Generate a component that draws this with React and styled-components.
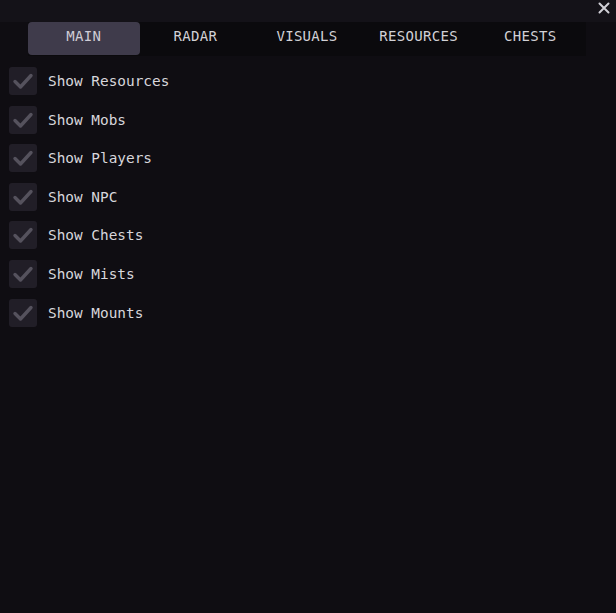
import React from "react";
import styled, { createGlobalStyle } from "styled-components";

const GlobalStyle = createGlobalStyle`
  html, body {
    margin: 0;
    padding: 0;
    background: #0f0d12;
  }
`;

const Window = styled.div`
  width: 616px;
  height: 613px;
  background: #0f0d12;
  font-family: "DejaVu Sans Mono", "Liberation Mono", monospace;
  color: #d6d5da;
  overflow: hidden;
`;

const TitleBar = styled.div`
  height: 22px;
  background: #141218;
  display: flex;
  justify-content: flex-end;
  align-items: flex-start;
`;

const CloseButton = styled.button`
  width: 22px;
  height: 16px;
  margin-right: 1px;
  padding: 0;
  border: none;
  background: transparent;
  display: flex;
  align-items: center;
  justify-content: center;
  cursor: pointer;
`;

const TabBar = styled.div`
  height: 34px;
  padding-left: 28px;
  display: flex;
`;

const TabStrip = styled.div`
  display: flex;
  background: #0b0a0d;
  width: 558px;
`;

const Tab = styled.div`
  width: 112px;
  height: 33px;
  box-sizing: border-box;
  padding-bottom: 5px;
  display: flex;
  align-items: center;
  justify-content: center;
  font-size: 14px;
  letter-spacing: 0.3px;
  color: ${(p) => (p.$active ? "#cfcdd6" : "#d2d1d6")};
  background: ${(p) => (p.$active ? "#3f3b4b" : "transparent")};
  border-radius: 4px;
`;

const List = styled.div`
  display: flex;
  flex-direction: column;
  gap: 10.6px;
  padding: 11px 0 0 9px;
`;

const Row = styled.label`
  display: flex;
  align-items: center;
  gap: 11px;
  height: 28px;
  font-size: 14.4px;
  color: #d8d7dc;
`;

const Box = styled.span`
  width: 28px;
  height: 28px;
  border-radius: 3px;
  background: #211e27;
  display: flex;
  align-items: center;
  justify-content: center;
`;

const tabs = ["MAIN", "RADAR", "VISUALS", "RESOURCES", "CHESTS"];
const options = [
  "Show Resources",
  "Show Mobs",
  "Show Players",
  "Show NPC",
  "Show Chests",
  "Show Mists",
  "Show Mounts",
];

const Check = () => (
  <svg width="28" height="28" viewBox="0 0 28 28">
    <path
      d="M6 14.5 L11.5 20 L22 8.5"
      fill="none"
      stroke="#55525d"
      strokeWidth="3.4"
      strokeLinecap="round"
      strokeLinejoin="round"
    />
  </svg>
);

export default function App() {
  return (
    <Window>
      <GlobalStyle />
      <TitleBar>
        <CloseButton aria-label="close">
          <svg width="12" height="12" viewBox="0 0 12 12">
            <path d="M1.5 1.5 L10.5 10.5 M10.5 1.5 L1.5 10.5" stroke="#d0cfd6" strokeWidth="2" strokeLinecap="round" />
          </svg>
        </CloseButton>
      </TitleBar>
      <TabBar>
        <TabStrip>
          {tabs.map((t, i) => (
            <Tab key={t} $active={i === 0}>{t}</Tab>
          ))}
        </TabStrip>
      </TabBar>
      <List>
        {options.map((o) => (
          <Row key={o}>
            <Box><Check /></Box>
            {o}
          </Row>
        ))}
      </List>
    </Window>
  );
}
